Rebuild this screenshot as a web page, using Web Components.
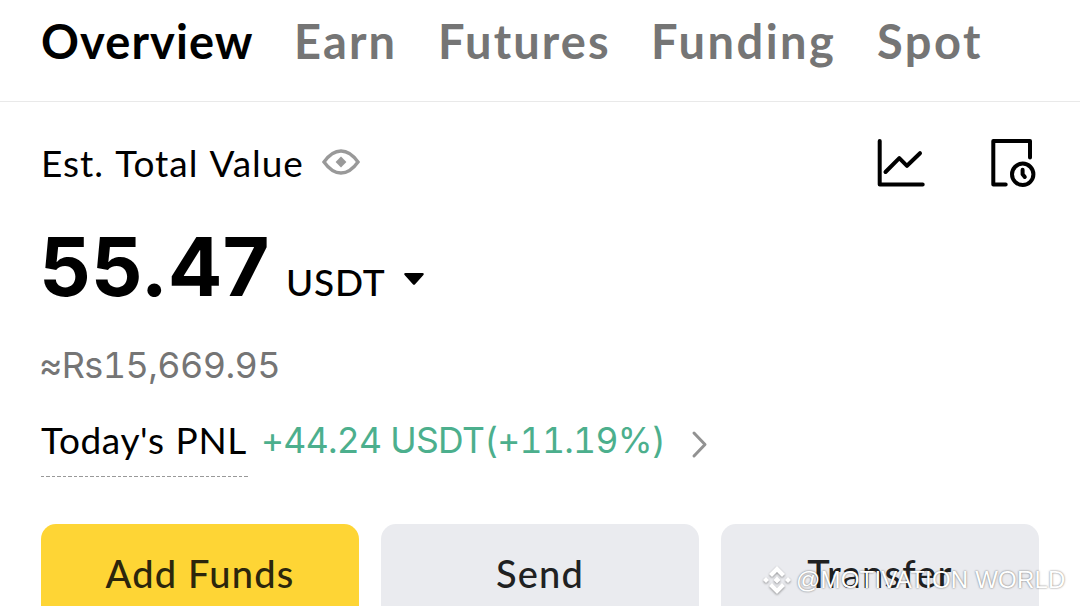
<!DOCTYPE html>
<html lang="en">
<head>
<meta charset="utf-8">
<meta name="viewport" content="width=device-width, initial-scale=1">
<title>Wallet</title>
<style>
  body {
    margin: 0;
    height: 606px;
    overflow: hidden;
    background: #fff;
    color: #000;
    font-family: Lato, "Liberation Sans", sans-serif;
  }
</style>
</head>
<body>
<wallet-page></wallet-page>

<script>
class WalletTab extends HTMLElement {
  constructor() {
    super();
    this.attachShadow({ mode: 'open' });
  }

  connectedCallback() {
    this.shadowRoot.innerHTML = `
      <style>
        :host {
          display: block;
          flex: none;
          font-size: 47px;
          line-height: 56px;
          font-weight: 700;
          letter-spacing: 2.1px;
          color: #757575;
          white-space: nowrap;
        }
        :host([active]) {
          color: #000;
          letter-spacing: 1.1px;
        }
      </style>
      <slot></slot>
    `;
  }
}

class WalletTabs extends HTMLElement {
  constructor() {
    super();
    this.attachShadow({ mode: 'open' });
  }

  connectedCallback() {
    this.shadowRoot.innerHTML = `
      <style>
        :host {
          display: flex;
          box-sizing: border-box;
          height: 102px;
          padding: 13px 0 0 41px;
          border-bottom: 1px solid #e9e9e9;
        }
      </style>
      <slot></slot>
    `;
  }
}

class TotalHeader extends HTMLElement {
  constructor() {
    super();
    this.attachShadow({ mode: 'open' });
  }

  connectedCallback() {
    this.shadowRoot.innerHTML = `
      <style>
        :host {
          display: flex;
          align-items: center;
          height: 50px;
          padding: 36px 43px 0 41px;
        }
        .label {
          font-size: 37px;
          line-height: 50px;
          letter-spacing: 0.95px;
          word-spacing: 2px;
          width: 280px;
          white-space: nowrap;
        }
        .eye { margin-bottom: 2px; }
        .actions {
          display: flex;
          gap: 62px;
          margin-left: auto;
        }
        svg { display: block; }
      </style>
      <span class="label"><slot></slot></span>
      <svg class="eye" width="40" height="28" viewBox="0 0 40 28" fill="none" stroke="#999" stroke-width="3.4">
        <path d="M3 14C8 7 13 3 20 3s12 4 17 11c-5 7-10 11-17 11S8 21 3 14Z"/>
        <path d="M20 8.6l5.4 5.4-5.4 5.4-5.4-5.4z" fill="#999" stroke="none"/>
      </svg>
      <div class="actions">
        <svg width="50" height="50" viewBox="0 0 50 50" fill="none" stroke="#000" stroke-width="4" stroke-linecap="round" stroke-linejoin="round">
          <path d="M4.700 3v43.500h43"/>
          <path d="M10.500 34L24.300 20.200l7.700 7.600L45 15.200"/>
        </svg>
        <svg width="50" height="50" viewBox="0 0 50 50" fill="none" stroke="#000" stroke-width="4" stroke-linecap="round" stroke-linejoin="round">
          <path d="M43 19.500V3H6.300v43.500h12.400"/>
          <circle cx="35.700" cy="36.300" r="10.700"/>
          <path d="M35.600 31.800v4.400l2.200 2.800"/>
        </svg>
      </div>
    `;
  }
}

class WalletBalance extends HTMLElement {
  constructor() {
    super();
    this.attachShadow({ mode: 'open' });
  }

  connectedCallback() {
    const amount = this.getAttribute('amount') || '0.00';
    const unit = this.getAttribute('unit') || 'USDT';
    const fiat = this.getAttribute('fiat') || '';

    this.shadowRoot.innerHTML = `
      <style>
        :host {
          display: block;
          padding: 29px 41px 0 39px;
        }
        .row {
          display: flex;
          align-items: baseline;
          height: 100px;
        }
        .amount {
          width: 247px;
          font-family: Inter, sans-serif;
          font-size: 81px;
          font-weight: 700;
          line-height: 100px;
        }
        .unit {
          width: 117px;
          font-size: 37px;
          font-weight: 500;
          letter-spacing: 0.8px;
        }
        .fiat {
          height: 50px;
          margin-top: 23px;
          font-family: Inter, sans-serif;
          font-size: 36px;
          font-variant-numeric: tabular-nums;
          line-height: 50px;
          letter-spacing: -0.6px;
          color: #757575;
          white-space: nowrap;
        }
      </style>
      <div class="row">
        <span class="amount">${amount}</span>
        <span class="unit">${unit}</span>
        <svg width="22" height="23" viewBox="0 0 22 23">
          <path d="M2.500 0h17c1.200 0 1.700 1 .9 1.900l-8.300 9.300c-.6.700-1.600.7-2.200 0L1.600 1.900C.8 1 1.300 0 2.500 0Z"/>
        </svg>
      </div>
      <div class="fiat">${fiat}</div>
    `;
  }
}

class PnlRow extends HTMLElement {
  constructor() {
    super();
    this.attachShadow({ mode: 'open' });
  }

  connectedCallback() {
    this.shadowRoot.innerHTML = `
      <style>
        :host {
          display: flex;
          height: 61px;
          padding: 26px 41px 0;
          line-height: 50px;
          font-size: 36px;
          white-space: nowrap;
        }
        .label {
          width: 207px;
          height: 61px;
          font-size: 37px;
          line-height: 48px;
          letter-spacing: 0.6px;
          word-spacing: 1px;
          /* dashed underline, 3.5px dash and 2px gap */
          background: repeating-linear-gradient(90deg, #999 0 3.5px, transparent 3.5px 5.5px) left bottom / 100% 1px no-repeat;
        }
        .value {
          width: 428px;
          margin-left: 13px;
          font-family: Inter, sans-serif;
          font-size: 35.5px;
          font-variant-numeric: tabular-nums;
          letter-spacing: -0.7px;
          color: #4caf8d;
        }
        svg { margin-top: 13px; }
      </style>
      <span class="label"><slot name="label"></slot></span>
      <span class="value"><slot></slot></span>
      <svg width="20" height="30" viewBox="0 0 20 30" fill="none" stroke="#929292" stroke-width="3" stroke-linecap="round" stroke-linejoin="round">
        <path d="M5 4l11 11.500L5 27"/>
      </svg>
    `;
  }
}

class ActionButton extends HTMLElement {
  constructor() {
    super();
    this.attachShadow({ mode: 'open' });
  }

  connectedCallback() {
    this.shadowRoot.innerHTML = `
      <style>
        :host { display: block; flex: 1; }
        button {
          display: block;
          width: 100%;
          height: 98px;
          padding: 0;
          border: 0;
          border-radius: 15px;
          background: #eaebef;
          color: #202122;
          font: 500 38px/97px Lato, "Liberation Sans", sans-serif;
          letter-spacing: 1.2px;
        }
        :host([primary]) button {
          background: #fed535;
          color: #2c260c;
        }
      </style>
      <button><slot></slot></button>
    `;
  }
}

class AuthorMark extends HTMLElement {
  constructor() {
    super();
    this.attachShadow({ mode: 'open' });
  }

  connectedCallback() {
    this.shadowRoot.innerHTML = `
      <style>
        :host {
          position: absolute;
          left: 762px;
          top: 564px;
          display: flex;
          align-items: center;
          height: 32px;
          color: #fff;
          font-family: "Liberation Sans", sans-serif;
          font-size: 24px;
          letter-spacing: 0.2px;
          white-space: nowrap;
          text-shadow: 0 0 2px rgba(0, 0, 0, .6);
        }
        svg {
          margin-right: 4px;
          filter: drop-shadow(0 1px 1px rgba(0, 0, 0, .4));
        }
      </style>
      <svg width="30" height="30" viewBox="0 0 30 30" fill="#fff">
        <path d="M15 1l8 8-3 3-5-5-5 5-3-3zM15 29l-8-8 3-3 5 5 5-5 3 3zM15 11.500l3.500 3.500-3.500 3.500-3.500-3.500zM4 12l3 3-3 3-3-3zM26 12l3 3-3 3-3-3z"/>
      </svg>
      <span><slot></slot></span>
    `;
  }
}

class WalletPage extends HTMLElement {
  constructor() {
    super();
    this.attachShadow({ mode: 'open' });
  }

  connectedCallback() {
    this.shadowRoot.innerHTML = `
      <style>
        :host {
          display: block;
          position: relative;
          height: 606px;
          overflow: hidden;
        }
        .t1 { width: 253px; }
        .t2 { width: 144px; }
        .t3 { width: 213px; }
        .t4 { width: 226px; }
        .t4, .t5 { letter-spacing: 2.5px; }
        .buttons {
          display: flex;
          gap: 22px;
          padding: 47px 41px 0;
        }
      </style>
      <wallet-tabs>
        <wallet-tab class="t1" active>Overview</wallet-tab>
        <wallet-tab class="t2">Earn</wallet-tab>
        <wallet-tab class="t3">Futures</wallet-tab>
        <wallet-tab class="t4">Funding</wallet-tab>
        <wallet-tab class="t5">Spot</wallet-tab>
      </wallet-tabs>
      <total-header>Est. Total Value</total-header>
      <wallet-balance amount="55.47" unit="USDT" fiat="≈Rs15,669.95"></wallet-balance>
      <pnl-row><span slot="label">Today's PNL</span>+44.24 USDT(+11.19%)</pnl-row>
      <div class="buttons">
        <action-button primary>Add Funds</action-button>
        <action-button>Send</action-button>
        <action-button>Transfer</action-button>
      </div>
      <author-mark>@MOTIVATION WORLD</author-mark>
    `;
  }
}

customElements.define('wallet-tab', WalletTab);
customElements.define('wallet-tabs', WalletTabs);
customElements.define('total-header', TotalHeader);
customElements.define('wallet-balance', WalletBalance);
customElements.define('pnl-row', PnlRow);
customElements.define('action-button', ActionButton);
customElements.define('author-mark', AuthorMark);
customElements.define('wallet-page', WalletPage);
</script>
</body>
</html>
